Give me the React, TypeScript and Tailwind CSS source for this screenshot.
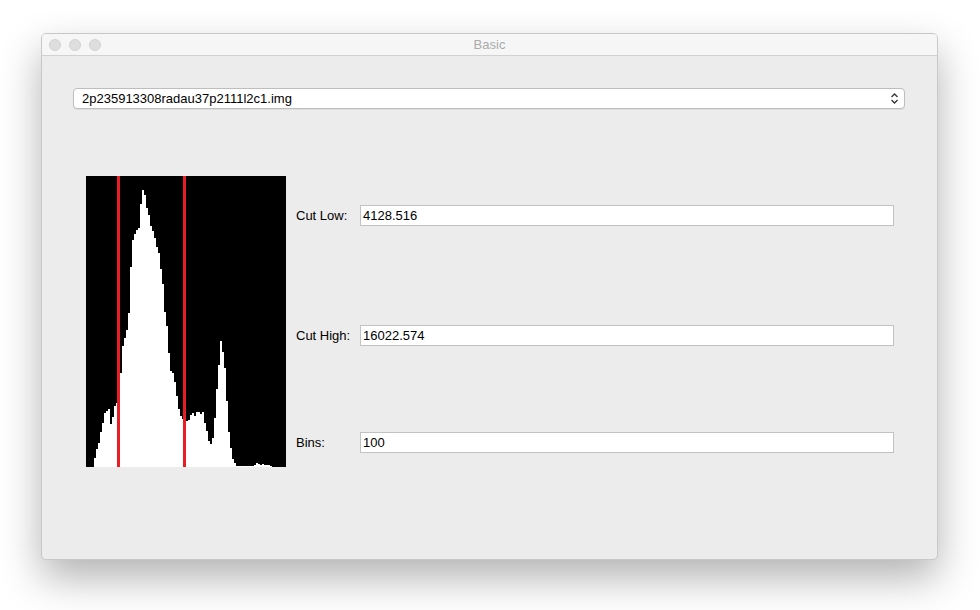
import React from "react";

const BINS = [
  0, 0, 0, 0, 9, 18, 24, 35, 44, 54, 56, 58, 43, 50, 61, 64, 80, 94, 121, 129,
  137, 154, 200, 227, 233, 237, 239, 263, 277, 272, 259, 252, 241, 236, 229, 220, 214, 198, 183, 155,
  141, 114, 96, 94, 85, 71, 58, 51, 48, 47, 46, 47, 52, 54, 51, 55, 55, 53, 55, 44,
  36, 26, 23, 29, 49, 78, 102, 126, 115, 99, 66, 35, 19, 8, 4, 1, 1, 1, 1, 1,
  1, 1, 1, 1, 2, 4, 3, 2, 3, 2, 2, 2, 1, 0, 0, 0, 0, 0, 0, 0,
];

function Histogram() {
  const W = 200;
  const H = 291;
  return (
    <svg width={W} height={H} viewBox={`0 0 ${W} ${H}`} shapeRendering="crispEdges" className="block shrink-0">
      <rect x={0} y={0} width={W} height={H} fill="#000" />
      {BINS.map((h, i) =>
        h > 0 ? <rect key={i} x={i * 2} y={H - h} width={2} height={h} fill="#fff" /> : null
      )}
      <rect x={31} y={0} width={3} height={H} fill="#ea1c24" />
      <rect x={97} y={0} width={3} height={H} fill="#ea1c24" />
    </svg>
  );
}

function Field({ label, value, className }: { label: string; value: string; className?: string }) {
  return (
    <div className={"flex items-center " + (className ?? "")}>
      <div className="w-[74px] shrink-0 whitespace-nowrap pl-[10px] text-[13px] text-black">{label}</div>
      <div className="h-[21px] min-w-0 flex-1 border border-[#c2c2c2] bg-white pl-[2px] text-[13px] leading-[19px] text-black">
        {value}
      </div>
    </div>
  );
}

export default function App() {
  return (
    <div
      className="h-[610px] w-[980px] bg-white pl-[41px] pt-[33px]"
      style={{ fontFamily: '"Liberation Sans", Arial, sans-serif' }}
    >
      <div className="flex h-[527px] w-[897px] flex-col overflow-hidden rounded-[5px] border border-[#c8c8c8] bg-[#ececec] shadow-[0_18px_40px_rgba(0,0,0,0.3)]">
        {/* title bar */}
        <div className="relative flex h-[22px] shrink-0 items-center border-b border-[#d1d1d1] bg-[#f6f6f6] pl-[7px]">
          <div className="flex gap-[8px]">
            <span className="h-[12px] w-[12px] rounded-full border border-[#d3d3d3] bg-[#dedede]" />
            <span className="h-[12px] w-[12px] rounded-full border border-[#d3d3d3] bg-[#dedede]" />
            <span className="h-[12px] w-[12px] rounded-full border border-[#d3d3d3] bg-[#dedede]" />
          </div>
          <div className="absolute inset-0 flex items-center justify-center text-[13px] text-[#ababab]">Basic</div>
        </div>

        {/* body */}
        <div className="flex flex-col pl-[31px] pr-[32px] pt-[32px]">
          <div className="flex h-[21px] items-center justify-between rounded-[4px] border border-[#bdbdbd] bg-white pl-[8px] pr-[5px] text-[13px] text-black shadow-[0_1px_0_rgba(0,0,0,0.06)]">
            <span>2p235913308radau37p2111l2c1.img</span>
            <svg width="9" height="13" viewBox="0 0 9 13" className="block">
              <path d="M1.5 5 L4.5 2 L7.5 5" fill="none" stroke="#333" strokeWidth="1.3" />
              <path d="M1.5 8 L4.5 11 L7.5 8" fill="none" stroke="#333" strokeWidth="1.3" />
            </svg>
          </div>

          <div className="mt-[67px] flex pl-[13px] pr-[11px]">
            <Histogram />
            <div className="flex min-w-0 flex-1 flex-col">
              <Field label="Cut Low:" value="4128.516" className="mt-[29px]" />
              <Field label="Cut High:" value="16022.574" className="mt-[99px]" />
              <Field label="Bins:" value="100" className="mt-[86px]" />
            </div>
          </div>
        </div>
      </div>
    </div>
  );
}
